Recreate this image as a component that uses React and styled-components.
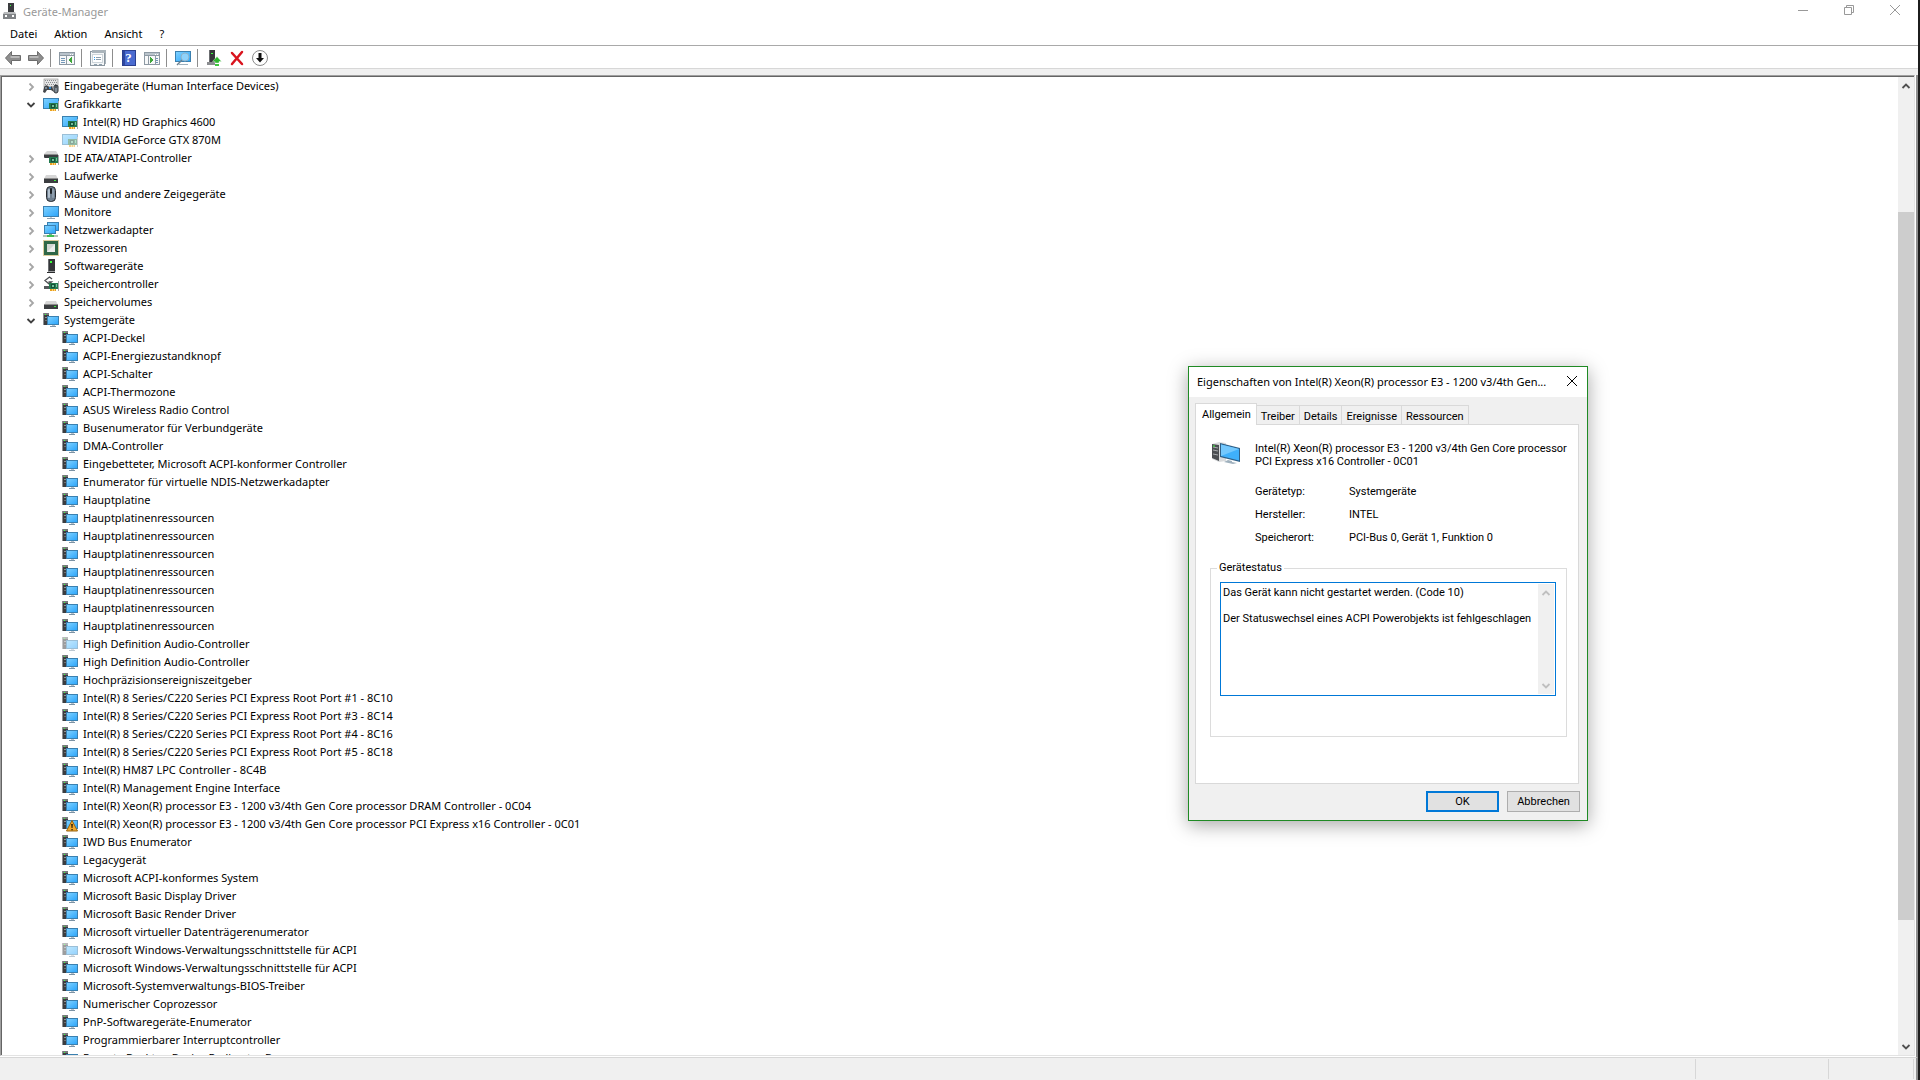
import { useId } from 'react';
import styled, { createGlobalStyle } from 'styled-components';

const GlobalStyle = createGlobalStyle`
  *, *::before, *::after {
    box-sizing: border-box;
  }
  body {
    margin: 0;
    overflow: hidden;
    background: #fff;
    color: #000;
    font-family: 'Noto Sans', 'Open Sans', sans-serif;
    font-size: 11px;
  }
  button, textarea {
    font: inherit;
    color: inherit;
    margin: 0;
    padding: 0;
    border: 0;
    background: none;
    border-radius: 0;
  }
  ul, dl, dd, fieldset {
    margin: 0;
    padding: 0;
    list-style: none;
  }
  svg {
    display: block;
    flex: none;
  }
`;

/* ---------- icons ---------- */

const Icon = styled.svg.attrs({ viewBox: '0 0 16 16', 'aria-hidden': true })`
  width: 16px;
  height: 16px;
  opacity: ${(props) => (props.$faded ? 0.5 : 1)};
`;

const Screen = ({ x, y, w, h }) => {
  const id = useId();
  return (
    <>
      <linearGradient id={id} x1="0" y1="0" x2="1" y2="1">
        <stop offset="0" stopColor="#7cd0ff" />
        <stop offset="1" stopColor="#2ea6fb" />
      </linearGradient>
      <rect x={x} y={y} width={w} height={h} fill="#3a80b0" />
      <rect x={x + 1} y={y + 1} width={w - 2} height={h - 2} fill={`url(#${id})`} />
    </>
  );
};

const Card = () => (
  <g>
    <rect x="6" y="7" width="9" height="6" fill="#237a4f" />
    <rect x="8" y="8" width="4" height="4" fill="#174f38" />
    <rect x="9" y="9" width="2" height="2" fill="#6fc298" />
    <rect x="13" y="8" width="1" height="3" fill="#78c39c" />
    <rect x="15" y="5" width="1" height="10" fill="#a9a9a9" />
    <rect x="7" y="13" width="6" height="2" fill="#e8a020" />
    <rect x="9" y="13" width="1" height="2" fill="#ffd277" />
    <rect x="11" y="13" width="1" height="2" fill="#ffd277" />
  </g>
);

const SystemIcon = ({ faded, warning }) => (
  <Icon $faded={faded}>
    <rect x="0" y="1" width="6" height="12" fill="#3c3d40" />
    <rect x="0" y="1" width="6" height="2" fill="#77797c" />
    <rect x="0" y="1" width="1" height="12" fill="#8f9194" />
    <rect x="2" y="2" width="1" height="1" fill="#3cff3c" />
    <rect x="2" y="5" width="4" height="1" fill="#8f9194" />
    <rect x="2" y="8" width="3" height="1" fill="#6f7174" />
    <Screen x={4} y={4} w={12} h={9} />
    <rect x="9" y="13" width="3" height="1" fill="#b9c4cc" />
    <rect x="7" y="14" width="6" height="1" fill="#7d93a5" />
    {warning && (
      <>
        <path d="M10 4.500 15.500 15H4.500z" fill="#f0a82c" stroke="#9a6410" strokeLinejoin="round" />
        <path d="M9.200 8h1.600l-.3 4h-1z" fill="#221a08" />
        <rect x="9.400" y="13" width="1.300" height="1.300" fill="#221a08" />
      </>
    )}
  </Icon>
);

const DisplayIcon = ({ faded }) => (
  <Icon $faded={faded}>
    <Screen x={0} y={2} w={16} h={11} />
    <Card />
  </Icon>
);

const HidIcon = () => (
  <Icon>
    <rect x="1" y="1" width="14" height="8" fill="#e4e4e4" stroke="#8a8a8a" strokeWidth=".6" />
    <path d="M2 2.500h12M3 4.500h12M2 6.500h12" stroke="#8a8d90" strokeDasharray="1 1" />
    <path d="M1 9Q3 6 5 8t4 0l2 6-3-2H4l-2 3-2-1z" fill="#43464a" />
    <circle cx="3" cy="10" r="1" fill="#8fa0ad" />
    <circle cx="7" cy="10" r="1" fill="#2c9bf0" />
    <rect x="11" y="7" width="4" height="8" rx="2" fill="#7f8a94" stroke="#303438" />
    <path d="M13 7v3" stroke="#222" />
  </Icon>
);

const IdeIcon = () => (
  <Icon>
    <path d="M4 1h9l2 3H1z" fill="#d6d6d6" />
    <rect x="1" y="4" width="14" height="4" rx="1" fill="#3b3d40" />
    <rect x="1" y="4" width="14" height="1" fill="#8d8d8d" />
    <Card />
  </Icon>
);

const DiskIcon = () => (
  <Icon>
    <path d="M3 7h10l2 4H1z" fill="#d6d6d6" />
    <rect x="1" y="10" width="14" height="1" fill="#8d8d8d" />
    <rect x="1" y="11" width="14" height="4" fill="#3b3d40" />
    <rect x="11" y="12" width="2" height="1" fill="#3bea3b" />
  </Icon>
);

const MouseIcon = () => (
  <Icon>
    <rect x="3.500" y=".5" width="9" height="15" rx="4" fill="#6f7f8f" stroke="#25282c" />
    <rect x="5" y="3" width="2" height="9" rx="1" fill="#b4c2cf" />
    <rect x="9" y="3" width="2" height="9" rx="1" fill="#8d9dac" />
    <rect x="7" y="2" width="2" height="6" rx="1" fill="#1d2023" />
  </Icon>
);

const MonitorIcon = () => (
  <Icon>
    <Screen x={0} y={2} w={16} h={11} />
    <rect x="7" y="13" width="2" height="1" fill="#c9d2d9" />
    <rect x="4" y="14" width="8" height="1" fill="#8fa1b0" />
  </Icon>
);

const NetworkIcon = () => (
  <Icon>
    <Screen x={4} y={0} w={12} h={9} />
    <Screen x={1} y={3} w={12} h={9} />
    <rect x="6" y="12" width="3" height="1" fill="#6fb982" />
    <rect x="0" y="13" width="15" height="2" fill="#b6c3b8" />
    <rect x="4" y="13" width="7" height="2" fill="#3fbf55" />
  </Icon>
);

const CpuIcon = () => (
  <Icon>
    <rect x=".5" y=".5" width="15" height="15" fill="none" stroke="#b89a3c" strokeDasharray="1 1" />
    <rect x="1" y="1" width="14" height="14" fill="#2f6747" />
    <rect x="4" y="4" width="8" height="8" fill="#d3d6d2" />
    <path d="M12 4v8H4z" fill="#eceeec" />
  </Icon>
);

const SoftwareIcon = () => (
  <Icon>
    <rect x="5" y="1" width="7" height="13" fill="#333538" />
    <rect x="5" y="1" width="1" height="13" fill="#6b6d70" />
    <rect x="7" y="3" width="2" height="2" fill="#3cff3c" />
    <rect x="4" y="14" width="8" height="1" fill="#2a2b2d" />
    <rect x="5" y="13" width="7" height="1" fill="#9b9d9f" />
  </Icon>
);

const StorageIcon = () => (
  <Icon>
    <path d="M9 3 6.500 1 2 4.500 6 8l2.500-2H5.500" fill="none" stroke="#4b4d50" strokeWidth="1.300" />
    <path d="M1 10h8v3H1z" fill="#55585b" />
    <Card />
  </Icon>
);

const ArrowIcon = ({ forward }) => (
  <Icon>
    <path
      d={forward ? 'M15.500 8 9.500 1.500v4H.5v5h9v4z' : 'M.5 8l6-6.500v4h9v5h-9v4z'}
      fill="#8e8e8e"
      stroke="#6c6c6c"
      strokeLinejoin="round"
    />
    <path d={forward ? 'M1.500 7h9' : 'M5.500 7h9'} stroke="#b9b9b9" strokeWidth="2" />
  </Icon>
);

const PaneIcon = ({ right }) => (
  <Icon shapeRendering="crispEdges">
    <rect x="0" y="2" width="16" height="13" fill="#8d99a3" />
    <rect x="1" y="3" width="14" height="2" fill="#b9c3cb" />
    <path d="M11 4h1m1 0h1" stroke="#fff" />
    <rect x="1" y="6" width="14" height="8" fill="#f7f8f9" />
    <rect x={right ? 4 : 7} y="6" width="1" height="8" fill="#8d99a3" />
    <rect x={right ? 11 : 7} y="6" width="1" height="8" fill="#8d99a3" />
    <path d={right ? 'M12 8h2M12 10h2M12 12h2' : 'M2 8h4M2 10h4M2 12h4'} stroke="#7397b8" />
    <path d={right ? 'M6 7v6l4-3z' : 'M13 7v6l-4-3z'} fill="#3fa63a" />
  </Icon>
);

const PropertiesIcon = () => (
  <Icon shapeRendering="crispEdges">
    <rect x="0" y="1" width="15" height="15" fill="#8b969f" />
    <rect x="1" y="2" width="13" height="13" fill="#f4f6f7" />
    <rect x="2" y="0" width="14" height="3" fill="#aab4bb" />
    <rect x="15" y="3" width="1" height="11" fill="#aab4bb" />
    <rect x="2" y="4" width="11" height="9" fill="#cdd5da" />
    <rect x="3" y="5" width="9" height="7" fill="#fff" />
    <path d="M6 7h5M6 9h5M4 14h3M9 14h3" stroke="#8ea0af" />
    <path d="M4 7h1M4 9h1" stroke="#2c9bf0" />
  </Icon>
);

const HelpGlyph = styled.span`
  width: 14px;
  height: 16px;
  border: 1px solid #2b3f8f;
  background: linear-gradient(90deg, #2d479f 2px, #4a6bd0 2px);
  color: #fff;
  font: bold 13px/14px 'Liberation Serif', serif;
  text-align: center;
`;

const ScanIcon = () => (
  <Icon>
    <Screen x={0} y={1} w={16} h={11} />
    <rect x="4" y="14" width="9" height="1" fill="#9fb0bd" />
    <circle cx="10" cy="7" r="4" fill="#8fd2fb" stroke="#8fb3c9" />
    <path d="M7 10l-5 5" stroke="#6b7f8d" strokeWidth="1.500" />
  </Icon>
);

const UpdateIcon = () => (
  <Icon>
    <rect x="3" y="0" width="6" height="13" fill="#35373a" />
    <rect x="3" y="0" width="1" height="13" fill="#6b6d70" />
    <rect x="5" y="3" width="2" height="1" fill="#3cff3c" />
    <rect x="1" y="12" width="8" height="3" fill="#8b8d90" />
    <path d="M11 6.500 15.500 11.500H13V13H9v-1.500H6.500z" fill="#2fb62f" stroke="#fff" strokeWidth=".4" />
    <rect x="9" y="14" width="4" height="2" fill="#3fc53f" />
  </Icon>
);

const RemoveIcon = () => (
  <Icon>
    <path d="M3 3l10 11M13 2 3 14" stroke="#d9141e" strokeWidth="2.500" strokeLinecap="round" />
  </Icon>
);

const DisableIcon = () => (
  <Icon>
    <circle cx="8" cy="8" r="7.500" fill="#fff" stroke="#8b8b8b" />
    <path d="M6.500 3h3v5h2.500L8 12.500 4 8h2.500z" fill="#111" />
  </Icon>
);

const ManagerIcon = () => (
  <Icon>
    <rect x="6" y="0" width="6" height="10" fill="#3a3c3f" />
    <rect x="8" y="2" width="1" height="1" fill="#3cff3c" />
    <path d="M2 9h11l1 2v5H1v-5z" fill="#b9bbbd" />
    <rect x="1" y="11" width="13" height="5" fill="#808386" />
    <rect x="3" y="12" width="2" height="2" fill="#fff" />
    <rect x="10" y="12" width="2" height="2" fill="#fff" />
  </Icon>
);

const Chevron = ({ dir, color = '#a6a6a6' }) => {
  const paths = {
    right: 'M3.500 1.500 7 5 3.500 8.500',
    down: 'M1.500 3 5 6.500 8.500 3',
    up: 'M1.500 7 5 3.500 8.500 7',
  };
  return (
    <svg width="10" height="10" viewBox="0 0 10 10" aria-hidden="true">
      <path d={paths[dir]} fill="none" stroke={color} strokeWidth="1.800" />
    </svg>
  );
};

const CaptionIcon = ({ kind, color = '#999' }) => {
  const paths = {
    min: 'M0 5.500h10',
    restore: 'M.5 2.500h7v7h-7zM2.500 2.500v-2h7v7h-2',
    close: 'M0 0l10 10M10 0 0 10',
  };
  return (
    <svg width="10" height="10" viewBox="0 0 10 10" aria-hidden="true">
      <path d={paths[kind]} fill="none" stroke={color} />
    </svg>
  );
};

/* The large device picture on the properties page */
const DeviceImage = () => (
  <svg width="32" height="32" viewBox="0 0 32 32" aria-hidden="true">
    <path d="M2 6 9 4l7 1v18l-7 1-7-3z" fill="#d9dbdd" />
    <path d="M2 6l7 1v16l-7-3z" fill="#4b4e52" />
    <path d="M3 9l5 1M3 12l5 1M3 16l5 1" stroke="#a8abae" />
    <path d="M3 8h2" stroke="#3cff3c" />
    <path d="M10 5l20 5v14l-20-5z" fill="#2f5f86" />
    <path d="M11 6.500l18 4.500v11.500l-18-4.500z" fill="#3fb0fb" />
    <path d="M11 6.500l18 4.500-18 7z" fill="#74c8fd" />
    <path d="M18 22l4 1v1l5 1-4 1-9-2z" fill="#9fb0bd" />
  </svg>
);

/* ---------- main window ---------- */

const Window = styled.div`
  display: flex;
  flex-direction: column;
  height: 100vh;
  border-right: 2px solid #1c1c1c;
`;

const TitleBar = styled.header`
  display: flex;
  align-items: flex-start;
  height: 24px;
  padding-left: 2px;
`;

const WindowTitle = styled.h1`
  display: flex;
  align-items: center;
  gap: 5px;
  flex: 1;
  height: 22px;
  margin: 0;
  color: #999;
  font-size: 11px;
  font-weight: 400;
`;

const CaptionButton = styled.button`
  display: flex;
  align-items: center;
  justify-content: center;
  width: 46px;
  height: 20px;
`;

const MenuBar = styled.nav`
  display: flex;
  gap: 1px;
  height: 21px;
  padding: 0 2px;
`;

const MenuItem = styled.button`
  height: 18px;
  padding: 0 8px;
`;

const Toolbar = styled.div`
  display: flex;
  align-items: center;
  height: 24px;
  padding: 2px 0 0 1px;
  border-top: 1px solid #a9a9a9;
  border-bottom: 1px solid #d7d7d7;
`;

const ToolButton = styled.button`
  display: flex;
  align-items: center;
  justify-content: center;
  width: 23px;
  height: 20px;
`;

const Separator = styled.span`
  width: 1px;
  height: 18px;
  margin: 0 4px 0 3px;
  background: #8d8d8d;
`;

const Body = styled.div`
  display: flex;
  flex-direction: column;
  flex: 1;
  min-height: 0;
  padding-top: 6px;
  background: #f0f0f0;
`;

const Frame = styled.main`
  display: flex;
  flex: 1;
  min-height: 0;
  border-right: 2px solid #8f8f8f;
  background: #fff;
`;

const TreePane = styled.div`
  display: flex;
  flex: 1;
  min-width: 0;
  margin: 0 1px 1px 0;
  border: 1px solid #e3e3e3;
  border-top-color: #a0a0a0;
  border-left-color: #a0a0a0;
`;

const TreeArea = styled.div`
  flex: 1;
  overflow: hidden;
  border-top: 1px solid #646464;
  border-left: 1px solid #646464;
`;

const Tree = styled.ul`
  padding-left: 24px;
`;

const TreeRow = styled.div`
  display: flex;
  align-items: center;
  height: 18px;
  white-space: nowrap;
`;

const Expander = styled.button`
  width: 17px;
  height: 18px;
  padding: 2px 0 0;
`;

const Branch = styled.ul`
  padding-left: 36px;
`;

const Label = styled.span`
  padding: 0 0 2px 5px;
`;

const ScrollBar = styled.div`
  display: flex;
  flex-direction: column;
  width: 16px;
  background: #f0f0f0;
`;

const MainScrollBar = styled(ScrollBar)`
  border-top: 1px solid #646464;
`;

const ScrollButton = styled.button`
  display: flex;
  align-items: center;
  justify-content: center;
  height: 17px;
`;

const Track = styled.div`
  flex: ${(props) => props.$grow};
`;

const Thumb = styled(Track)`
  background: #cdcdcd;
`;

const StatusBar = styled.footer`
  display: flex;
  justify-content: flex-end;
  height: 23px;
  padding: 1px 2px 1px 0;
  border-top: 1px solid #d7d7d7;
  border-right: 2px solid #8f8f8f;
`;

const StatusCell = styled.div`
  width: ${(props) => props.$width}px;
  border-right: 1px solid #d7d7d7;
`;

/* ---------- properties dialog ---------- */

const Dialog = styled.section`
  position: absolute;
  top: 366px;
  right: 332px;
  width: 400px;
  border: 1px solid #1f8a24;
  background: #f0f0f0;
  box-shadow: 0 4px 18px rgba(0, 0, 0, 0.35);
  font-family: Roboto, 'Liberation Sans', Arial, sans-serif;
`;

const DialogBar = styled.header`
  display: flex;
  align-items: center;
  height: 30px;
  padding: 0 0 2px 8px;
  background: #fff;
`;

const DialogTitle = styled.h2`
  flex: 1;
  margin: 0;
  overflow: hidden;
  font: 400 11px 'Noto Sans', 'Open Sans', sans-serif;
  white-space: nowrap;
`;

const DialogClose = styled(CaptionButton)`
  width: 30px;
`;

const Tabs = styled.div`
  display: flex;
  align-items: flex-end;
  height: 27px;
  padding: 0 6px;
`;

const Tab = styled.button`
  position: relative;
  height: ${(props) => (props.$active ? 22 : 19)}px;
  margin-bottom: ${(props) => (props.$active ? -1 : 0)}px;
  padding: ${(props) => (props.$active ? '0 5px 1px 6px' : '2px 4px 0')};
  border: 1px solid #d9d9d9;
  border-bottom: 0;
  background: ${(props) => (props.$active ? '#fff' : '#f0f0f0')};

  & + & {
    border-left: 0;
  }
`;

const Page = styled.div`
  height: 360px;
  margin: 0 8px 0 6px;
  padding: 13px 11px 0 14px;
  border: 1px solid #d9d9d9;
  background: #fff;
`;

const DeviceHead = styled.div`
  display: flex;
  gap: 13px;
  height: 47px;
`;

const DeviceName = styled.p`
  flex: 1;
  margin: 4px 0 0;
  line-height: 13px;
  white-space: nowrap;
`;

const Facts = styled.dl`
  display: grid;
  grid-template-columns: 94px 1fr;
  grid-auto-rows: 23px;
  padding-left: 45px;
  line-height: 13px;
`;

const Fact = styled.div`
  display: contents;
`;

const StatusGroup = styled.fieldset`
  min-width: 0;
  height: 176px;
  margin-top: 7px;
  padding: 7px 10px 0 6px;
  border: 1px solid #dcdcdc;
`;

const Legend = styled.legend`
  padding: 0 2px;
  line-height: 14px;
`;

const StatusBox = styled.div`
  display: flex;
  height: 114px;
  margin-left: 3px;
  padding: 1px;
  border: 1px solid #0078d7;
`;

const StatusText = styled.textarea`
  flex: 1;
  padding: 2px 0 0 1px;
  outline: 0;
  resize: none;
  overflow: hidden;
  line-height: 13px;
`;

const DialogButtons = styled.div`
  display: flex;
  justify-content: flex-end;
  gap: 8px;
  padding: 7px 7px 8px;
`;

const DialogButton = styled.button`
  width: 73px;
  height: 21px;
  border: ${(props) => (props.$primary ? '2px solid #0078d7' : '1px solid #adadad')};
  background: #e1e1e1;
`;

const tools = [
  { label: 'Zurück', icon: <ArrowIcon /> },
  { label: 'Vorwärts', icon: <ArrowIcon forward />, end: true },
  { label: 'Konsolenstruktur', icon: <PaneIcon />, end: true },
  { label: 'Eigenschaften', icon: <PropertiesIcon />, end: true },
  { label: 'Hilfe', icon: <HelpGlyph>?</HelpGlyph> },
  { label: 'Aktionsbereich', icon: <PaneIcon right />, end: true },
  { label: 'Nach geänderter Hardware suchen', icon: <ScanIcon />, end: true },
  { label: 'Treiber aktualisieren', icon: <UpdateIcon /> },
  { label: 'Deinstallieren', icon: <RemoveIcon /> },
  { label: 'Deaktivieren', icon: <DisableIcon /> },
];

const systemDevices = [
  'ACPI-Deckel',
  'ACPI-Energiezustandknopf',
  'ACPI-Schalter',
  'ACPI-Thermozone',
  'ASUS Wireless Radio Control',
  'Busenumerator für Verbundgeräte',
  'DMA-Controller',
  'Eingebetteter, Microsoft ACPI-konformer Controller',
  'Enumerator für virtuelle NDIS-Netzwerkadapter',
  'Hauptplatine',
  'Hauptplatinenressourcen',
  'Hauptplatinenressourcen',
  'Hauptplatinenressourcen',
  'Hauptplatinenressourcen',
  'Hauptplatinenressourcen',
  'Hauptplatinenressourcen',
  'Hauptplatinenressourcen',
  { name: 'High Definition Audio-Controller', faded: true },
  'High Definition Audio-Controller',
  'Hochpräzisionsereigniszeitgeber',
  'Intel(R) 8 Series/C220 Series PCI Express Root Port #1 - 8C10',
  'Intel(R) 8 Series/C220 Series PCI Express Root Port #3 - 8C14',
  'Intel(R) 8 Series/C220 Series PCI Express Root Port #4 - 8C16',
  'Intel(R) 8 Series/C220 Series PCI Express Root Port #5 - 8C18',
  'Intel(R) HM87 LPC Controller - 8C4B',
  'Intel(R) Management Engine Interface',
  'Intel(R) Xeon(R) processor E3 - 1200 v3/4th Gen Core processor DRAM Controller - 0C04',
  { name: 'Intel(R) Xeon(R) processor E3 - 1200 v3/4th Gen Core processor PCI Express x16 Controller - 0C01', warning: true },
  'IWD Bus Enumerator',
  'Legacygerät',
  'Microsoft ACPI-konformes System',
  'Microsoft Basic Display Driver',
  'Microsoft Basic Render Driver',
  'Microsoft virtueller Datenträgerenumerator',
  { name: 'Microsoft Windows-Verwaltungsschnittstelle für ACPI', faded: true },
  'Microsoft Windows-Verwaltungsschnittstelle für ACPI',
  'Microsoft-Systemverwaltungs-BIOS-Treiber',
  'Numerischer Coprozessor',
  'PnP-Softwaregeräte-Enumerator',
  'Programmierbarer Interruptcontroller',
  'Remote Desktop Device Redirector Bus',
].map((device) => (typeof device === 'string' ? { name: device } : device));

const categories = [
  { name: 'Eingabegeräte (Human Interface Devices)', icon: HidIcon },
  {
    name: 'Grafikkarte',
    icon: DisplayIcon,
    devices: [{ name: 'Intel(R) HD Graphics 4600' }, { name: 'NVIDIA GeForce GTX 870M', faded: true }],
  },
  { name: 'IDE ATA/ATAPI-Controller', icon: IdeIcon },
  { name: 'Laufwerke', icon: DiskIcon },
  { name: 'Mäuse und andere Zeigegeräte', icon: MouseIcon },
  { name: 'Monitore', icon: MonitorIcon },
  { name: 'Netzwerkadapter', icon: NetworkIcon },
  { name: 'Prozessoren', icon: CpuIcon },
  { name: 'Softwaregeräte', icon: SoftwareIcon },
  { name: 'Speichercontroller', icon: StorageIcon },
  { name: 'Speichervolumes', icon: DiskIcon },
  { name: 'Systemgeräte', icon: SystemIcon, devices: systemDevices },
];

const tabs = ['Allgemein', 'Treiber', 'Details', 'Ereignisse', 'Ressourcen'];

const facts = [
  ['Gerätetyp:', 'Systemgeräte'],
  ['Hersteller:', 'INTEL'],
  ['Speicherort:', 'PCI-Bus 0, Gerät 1, Funktion 0'],
];

const statusMessage = 'Das Gerät kann nicht gestartet werden. (Code 10)\n\nDer Statuswechsel eines ACPI Powerobjekts ist fehlgeschlagen';

const Category = ({ name, icon: CategoryIcon, devices }) => (
  <li>
    <TreeRow>
      <Expander type="button" aria-label={name} aria-expanded={Boolean(devices)}>
        <Chevron dir={devices ? 'down' : 'right'} color={devices ? '#404040' : '#a6a6a6'} />
      </Expander>
      <CategoryIcon />
      <Label>{name}</Label>
    </TreeRow>
    {devices && (
      <Branch>
        {devices.map((device, i) => (
          // several devices share one name
          <li key={`${device.name}-${i}`}>
            <TreeRow>
              <CategoryIcon faded={device.faded} warning={device.warning} />
              <Label>{device.name}</Label>
            </TreeRow>
          </li>
        ))}
      </Branch>
    )}
  </li>
);

const PropertiesDialog = () => (
  <Dialog role="dialog" aria-labelledby="dialog-title">
    <DialogBar>
      <DialogTitle id="dialog-title">Eigenschaften von Intel(R) Xeon(R) processor E3 - 1200 v3/4th Gen...</DialogTitle>
      <DialogClose type="button" aria-label="Schließen">
        <CaptionIcon kind="close" color="#000" />
      </DialogClose>
    </DialogBar>
    <Tabs role="tablist">
      {tabs.map((tab, i) => (
        <Tab key={tab} type="button" role="tab" aria-selected={i === 0} $active={i === 0}>
          {tab}
        </Tab>
      ))}
    </Tabs>
    <Page role="tabpanel">
      <DeviceHead>
        <DeviceImage />
        <DeviceName>
          Intel(R) Xeon(R) processor E3 - 1200 v3/4th Gen Core processor
          <br />
          PCI Express x16 Controller - 0C01
        </DeviceName>
      </DeviceHead>
      <Facts>
        {facts.map(([term, value]) => (
          <Fact key={term}>
            <dt>{term}</dt>
            <dd>{value}</dd>
          </Fact>
        ))}
      </Facts>
      <StatusGroup>
        <Legend>Gerätestatus</Legend>
        <StatusBox>
          <StatusText readOnly aria-label="Gerätestatus" defaultValue={statusMessage} />
          <ScrollBar>
            <ScrollButton type="button" aria-label="Nach oben">
              <Chevron dir="up" color="#bfbfbf" />
            </ScrollButton>
            <Track $grow={1} />
            <ScrollButton type="button" aria-label="Nach unten">
              <Chevron dir="down" color="#bfbfbf" />
            </ScrollButton>
          </ScrollBar>
        </StatusBox>
      </StatusGroup>
    </Page>
    <DialogButtons>
      <DialogButton type="button" $primary>OK</DialogButton>
      <DialogButton type="button">Abbrechen</DialogButton>
    </DialogButtons>
  </Dialog>
);

const App = () => (
  <>
    <GlobalStyle />
    <Window>
      <TitleBar>
        <WindowTitle>
          <ManagerIcon />
          Geräte-Manager
        </WindowTitle>
        <CaptionButton type="button" aria-label="Minimieren"><CaptionIcon kind="min" /></CaptionButton>
        <CaptionButton type="button" aria-label="Verkleinern"><CaptionIcon kind="restore" /></CaptionButton>
        <CaptionButton type="button" aria-label="Schließen"><CaptionIcon kind="close" /></CaptionButton>
      </TitleBar>
      <MenuBar>
        {['Datei', 'Aktion', 'Ansicht', '?'].map((item) => (
          <MenuItem key={item} type="button">{item}</MenuItem>
        ))}
      </MenuBar>
      <Toolbar>
        {tools.map(({ label, icon, end }) => [
          <ToolButton key={label} type="button" aria-label={label}>{icon}</ToolButton>,
          end && <Separator key={`${label}-end`} />,
        ])}
      </Toolbar>
      <Body>
        <Frame>
          <TreePane>
            <TreeArea>
              <Tree>
                {categories.map((category) => (
                  <Category key={category.name} {...category} />
                ))}
              </Tree>
            </TreeArea>
            <MainScrollBar>
              <ScrollButton type="button" aria-label="Nach oben"><Chevron dir="up" color="#505050" /></ScrollButton>
              <Track $grow={1} />
              <Thumb $grow={6} />
              <Track $grow={1} />
              <ScrollButton type="button" aria-label="Nach unten"><Chevron dir="down" color="#505050" /></ScrollButton>
            </MainScrollBar>
          </TreePane>
        </Frame>
        <StatusBar>
          <StatusCell $width={133} />
          <StatusCell $width={133} />
          <StatusCell $width={85} />
        </StatusBar>
      </Body>
    </Window>
    <PropertiesDialog />
  </>
);

export default App;
